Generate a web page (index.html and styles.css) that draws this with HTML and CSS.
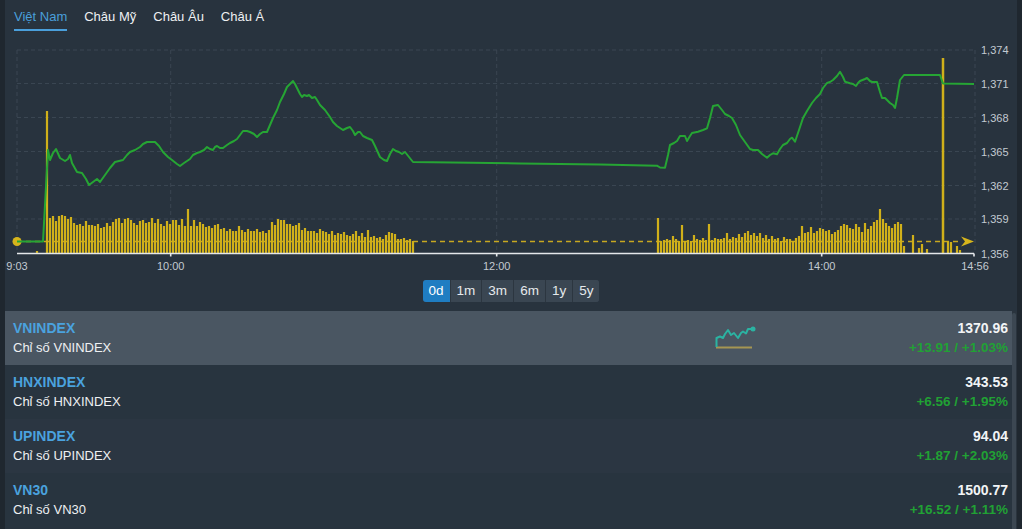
FILE: index.html
```html
<!DOCTYPE html>
<html lang="vi">
<head>
<meta charset="utf-8">
<title>Chỉ số thị trường</title>
<link rel="stylesheet" href="styles.css">
</head>
<body>
<div class="panel">
  <nav class="tabs">
    <a class="tab active">Việt Nam</a>
    <a class="tab">Châu Mỹ</a>
    <a class="tab">Châu Âu</a>
    <a class="tab">Châu Á</a>
  </nav>

  <svg class="chart" width="1012" height="240" viewBox="5 35 1012 240" xmlns="http://www.w3.org/2000/svg">
    <g class="grid">
      <path d="M17 50H975M17 83.5H975M17 117.5H975M17 151.5H975M17 185.5H975M17 219H975"/>
      <path d="M17 50V253M170.7 50V253M496.7 50V253M821.7 50V253M975 50V253"/>
    </g>
    <path class="ref" d="M17 241.5H962"/>
    <path class="vol" d="M37 253v-2M47 253V111
M50 253v-35M53 253v-37M56 253v-32M59 253v-37M62 253v-38M65 253v-37M68 253v-34M71 253v-36M74 253v-30M77 253v-28M80 253v-29M83 253v-27M86 253v-32M89 253v-28M92 253v-28M95 253v-27M98 253v-29M101 253v-25M104 253v-26M107 253v-30M110 253v-27M113 253v-31M116 253v-34M119 253v-35M122 253v-30M125 253v-34M128 253v-35M131 253v-33M134 253v-30M137 253v-28M140 253v-32M143 253v-33M146 253v-30M149 253v-31M152 253v-35M155 253v-30M158 253v-34M161 253v-29M164 253v-27M167 253v-32M170 253v-29M173 253v-33M176 253v-33M179 253v-28M182 253v-34M185 253v-27M188 253v-44M191 253v-27M194 253v-33M197 253v-27M200 253v-31M203 253v-29M206 253v-26M209 253v-27M212 253v-25M215 253v-28M218 253v-29M221 253v-24M224 253v-25M227 253v-22M230 253v-24M233 253v-22M236 253v-22M239 253v-27M242 253v-23M245 253v-21M248 253v-24M251 253v-22M254 253v-22M257 253v-24M260 253v-21M263 253v-22M266 253v-20M269 253v-23M272 253v-31M275 253v-28M278 253v-34M281 253v-33M284 253v-33M287 253v-29M290 253v-29M293 253v-27M296 253v-28M299 253v-30M302 253v-23M305 253v-25M308 253v-22M311 253v-22M314 253v-22M317 253v-20M320 253v-24M323 253v-22M326 253v-21M329 253v-19M332 253v-22M335 253v-18M338 253v-20M341 253v-19M344 253v-21M347 253v-18M350 253v-17M353 253v-19M356 253v-22M359 253v-17M362 253v-20M365 253v-16M368 253v-23M371 253v-16M374 253v-17M377 253v-15M380 253v-16M383 253v-14M386 253v-18M389 253v-21M392 253v-20M395 253v-19M398 253v-14M401 253v-14M404 253v-15M407 253v-13M410 253v-14M413 253v-12
M658 253v-35M661 253v-12M664 253v-13M667 253v-14M670 253v-13M673 253v-17M676 253v-14M679 253v-12M682 253v-28M685 253v-12M688 253v-13M691 253v-12M694 253v-18M697 253v-14M700 253v-13M703 253v-15M706 253v-13M709 253v-29M712 253v-13M715 253v-15M718 253v-14M721 253v-14M724 253v-15M727 253v-20M730 253v-14M733 253v-16M736 253v-15M739 253v-19M742 253v-16M745 253v-20M748 253v-22M751 253v-18M754 253v-20M757 253v-17M760 253v-20M763 253v-15M766 253v-18M769 253v-14M772 253v-17M775 253v-14M778 253v-15M781 253v-12M784 253v-16M787 253v-14M790 253v-14M793 253v-12M796 253v-15M799 253v-17M802 253v-27M805 253v-20M808 253v-21M811 253v-26M814 253v-20M817 253v-22M820 253v-25M823 253v-24M826 253v-22M829 253v-23M832 253v-19M835 253v-21M838 253v-23M841 253v-27M844 253v-29M847 253v-28M850 253v-25M853 253v-24M856 253v-29M859 253v-26M862 253v-21M865 253v-30M868 253v-24M871 253v-27M874 253v-31M877 253v-33M880 253v-44M883 253v-34M886 253v-30M889 253v-27M892 253v-25M895 253v-29M898 253v-31M901 253v-29
M904 253v-7M913 253v-18M919 253v-5M922 253v-9M927 253v-4M948 253v-12M951 253v-11M957 253v-7M960 253v-3"/>
    <path class="vol spike" d="M943 253V58"/>
    <polygon class="arrow" points="961,236.5 974,241.5 961,246.5 965,241.5"/>
    <circle class="dot" cx="17" cy="241.5" r="4.5"/>
    <polyline class="line" points="17,241.5 43,241.5 48,150 50,160 53,153 56,149 60,158 65,161 68,159 70,155 72,163 77,172 82,173 86,179 89,185 93,182 97,179 100,182 105,175 110,168 115,162 119,161 123,160 127,155 130,152 135,150 140,147 143,144 147,142 155,142 159,146 163,152 168,157 172,160 177,164 180,166 184,163 187,161 190,159 193,155 197,153 200,152 204,150 207,147 210,149 213,150 215,147 217,146 220,148 223,148 227,145 230,143 234,141 237,139 240,135 243,131 247,131 250,132 254,134 257,137 260,134 263,132 267,132 270,125 273,118 277,110 280,102 284,94 287,87 290,84 293,81 295,84 297,88 300,94 302,97 304,95 307,96 309,95 312,98 315,97 317,100 320,105 325,110 330,117 333,122 337,126 340,128 343,130 347,128 350,127 353,131 355,135 358,132 360,132 363,136 367,138 372,140 375,146 380,157 384,160 387,161 390,154 393,149 396,151 399,152 402,154 405,152 409,157 413,162 520,163.5 600,164.5 657,165.7 660,167.5 665,167.7 668,155 670,145 674,143 677,141 680,136 685,136 687,141 690,136 692,133 698,131.7 703,130 707,128.3 710,118 713,106 718,105 722,110 725,114 729,116 732,118 736,125 740,135 745,142 750,149 753,150 758,150 762,154 767,157.7 770,155 773,153.3 777,154.3 780,149 783,145 787,143 790,139 792,137.7 795,141.7 799,130 803,118 807,111 812,103 816,98 820,94 823,88 827,83 830,82 833,80 837,76 840,71.7 843,77 845,81.7 850,83.3 853,84 856,86 858,83 860,81 865,79 867,78 870,81 872,82 877,82 880,92 882,98 885,98 887,100 890,103 893,105 895,108 897,98 900,80 904,75 940,75 943,83.5 974,84"/>
    <path class="axis" d="M17 253.5H974M170.7 253.5v3M496.7 253.5v3M821.7 253.5v3M974 253.5v3"/>
    <g class="ylabels">
      <text x="981" y="54">1,374</text>
      <text x="981" y="87.5">1,371</text>
      <text x="981" y="121.5">1,368</text>
      <text x="981" y="155.5">1,365</text>
      <text x="981" y="189.5">1,362</text>
      <text x="981" y="223">1,359</text>
      <text x="981" y="257.5">1,356</text>
    </g>
    <g class="xlabels">
      <text x="17" y="270">9:03</text>
      <text x="170.7" y="270">10:00</text>
      <text x="496.7" y="270">12:00</text>
      <text x="821.7" y="270">14:00</text>
      <text x="975" y="270">14:56</text>
    </g>
  </svg>

  <div class="periods">
    <div class="btn-group">
      <button class="period active">0d</button>
      <button class="period">1m</button>
      <button class="period">3m</button>
      <button class="period">6m</button>
      <button class="period">1y</button>
      <button class="period">5y</button>
    </div>
  </div>

  <div class="list-wrap">
    <ul class="list">
      <li class="row selected">
        <div class="name">
          <div class="sym">VNINDEX</div>
          <div class="desc">Chỉ số VNINDEX</div>
        </div>
        <svg class="spark" width="44" height="54" viewBox="714 311 44 54" xmlns="http://www.w3.org/2000/svg">
          <path class="spark-base" d="M716 347.5H752"/>
          <polyline class="spark-line" points="716.5,347 716.5,338 720,336.5 723,338 725,334 728,330 731,335 734,333 738,338 741,333 743,331.5 746,333.5 748,329 753,329"/>
          <circle class="spark-dot" cx="753" cy="329" r="2.5"/>
        </svg>
        <div class="quote">
          <div class="price">1370.96</div>
          <div class="chg">+13.91 / +1.03%</div>
        </div>
      </li>
      <li class="row">
        <div class="name">
          <div class="sym">HNXINDEX</div>
          <div class="desc">Chỉ số HNXINDEX</div>
        </div>
        <div class="quote">
          <div class="price">343.53</div>
          <div class="chg">+6.56 / +1.95%</div>
        </div>
      </li>
      <li class="row alt">
        <div class="name">
          <div class="sym">UPINDEX</div>
          <div class="desc">Chỉ số UPINDEX</div>
        </div>
        <div class="quote">
          <div class="price">94.04</div>
          <div class="chg">+1.87 / +2.03%</div>
        </div>
      </li>
      <li class="row">
        <div class="name">
          <div class="sym">VN30</div>
          <div class="desc">Chỉ số VN30</div>
        </div>
        <div class="quote">
          <div class="price">1500.77</div>
          <div class="chg">+16.52 / +1.11%</div>
        </div>
      </li>
    </ul>
    <div class="scrollbar"><div class="thumb"></div></div>
  </div>
</div>
</body>
</html>
```

FILE: styles.css
```css
* { box-sizing: border-box; }

html, body {
  margin: 0;
  padding: 0;
  height: 100%;
}

body {
  background: #1f272f;
  font-family: "Liberation Sans", Arial, sans-serif;
  color: #e9ecef;
  font-size: 13px;
  overflow: hidden;
}

.panel {
  margin-left: 5px;
  width: 1012px;
  min-height: 100%;
  background: #28333e;
}

/* Tabs */
.tabs {
  display: flex;
  gap: 17px;
  height: 35px;
  padding-left: 9px;
}

.tab {
  padding-top: 9px;
  padding-bottom: 4px;
  line-height: 16px;
  font-size: 13px;
  color: #eef0f2;
  border-bottom: 2px solid transparent;
  height: 31px;
  cursor: pointer;
}

.tab.active {
  color: #4a9fdb;
  border-bottom-color: #4a9fdb;
}

/* Chart */
.chart {
  display: block;
}

.grid path {
  fill: none;
  stroke: #3a4652;
  stroke-width: 1;
  stroke-dasharray: 4 3;
}

.ref {
  fill: none;
  stroke: #c8a820;
  stroke-width: 1.5;
  stroke-dasharray: 5 4;
}

.vol {
  fill: none;
  stroke: #d0b01a;
  stroke-width: 2.2;
}

.vol.spike {
  stroke-width: 2.5;
}

.arrow {
  fill: #d6b51c;
}

.dot {
  fill: #d6b51c;
}

.line {
  fill: none;
  stroke: #26a534;
  stroke-width: 2;
  stroke-linejoin: round;
}

.axis {
  fill: none;
  stroke: #e4e7ea;
  stroke-width: 1.6;
}

.ylabels text,
.xlabels text {
  font-family: "Liberation Sans", Arial, sans-serif;
  font-size: 11px;
  fill: #c3cad1;
}

.xlabels text {
  text-anchor: middle;
}

/* Period buttons */
.periods {
  display: flex;
  justify-content: center;
  padding: 5px 0 9px;
}

.btn-group {
  display: flex;
  height: 22px;
  border-radius: 3px;
  overflow: hidden;
  background: #3a4652;
}

.period {
  font-family: "Liberation Sans", Arial, sans-serif;
  font-size: 13.5px;
  color: #e6e9ec;
  background: #3a4652;
  border: 0;
  border-left: 1px solid #2c3640;
  padding: 0 6px;
  height: 22px;
  line-height: 22px;
  margin: 0;
  cursor: pointer;
}

.period:first-child {
  border-left: 0;
  padding: 0 6px;
}

.period.active {
  background: #1f7dc2;
  color: #ffffff;
}

/* List */
.list-wrap {
  display: flex;
}

.list {
  list-style: none;
  margin: 0;
  padding: 0;
  flex: 1;
}

.row {
  display: flex;
  align-items: stretch;
  height: 54px;
  padding: 7px 4px 7px 8px;
  background: #28343f;
}

.row.alt {
  background: #2b3642;
}

.row.selected {
  background: #4a5662;
  padding-top: 0;
  padding-bottom: 0;
}

.row.selected .name,
.row.selected .quote {
  padding: 7px 0;
}

.name {
  flex: 1;
}

.sym {
  font-weight: bold;
  font-size: 14px;
  color: #4aa2de;
  line-height: 20px;
}

.desc {
  color: #eef0f2;
  line-height: 20px;
}

.spark {
  display: block;
  flex: none;
}

.spark-base {
  fill: none;
  stroke: #a59652;
  stroke-width: 2;
}

.spark-line {
  fill: none;
  stroke: #2bb3a2;
  stroke-width: 2;
  stroke-linejoin: round;
}

.spark-dot {
  fill: #2bb3a2;
}

.quote {
  width: 250px;
  text-align: right;
  flex: none;
}

.price {
  font-weight: bold;
  font-size: 14px;
  color: #f2f4f6;
  line-height: 20px;
}

.chg {
  font-weight: bold;
  font-size: 13.5px;
  color: #21a134;
  line-height: 20px;
}

.scrollbar {
  width: 5px;
  flex: none;
  padding-top: 2px;
  background: #2a343e;
}

.thumb {
  height: 220px;
  width: 4px;
  border-radius: 2px;
  background: #3c4752;
}
```
